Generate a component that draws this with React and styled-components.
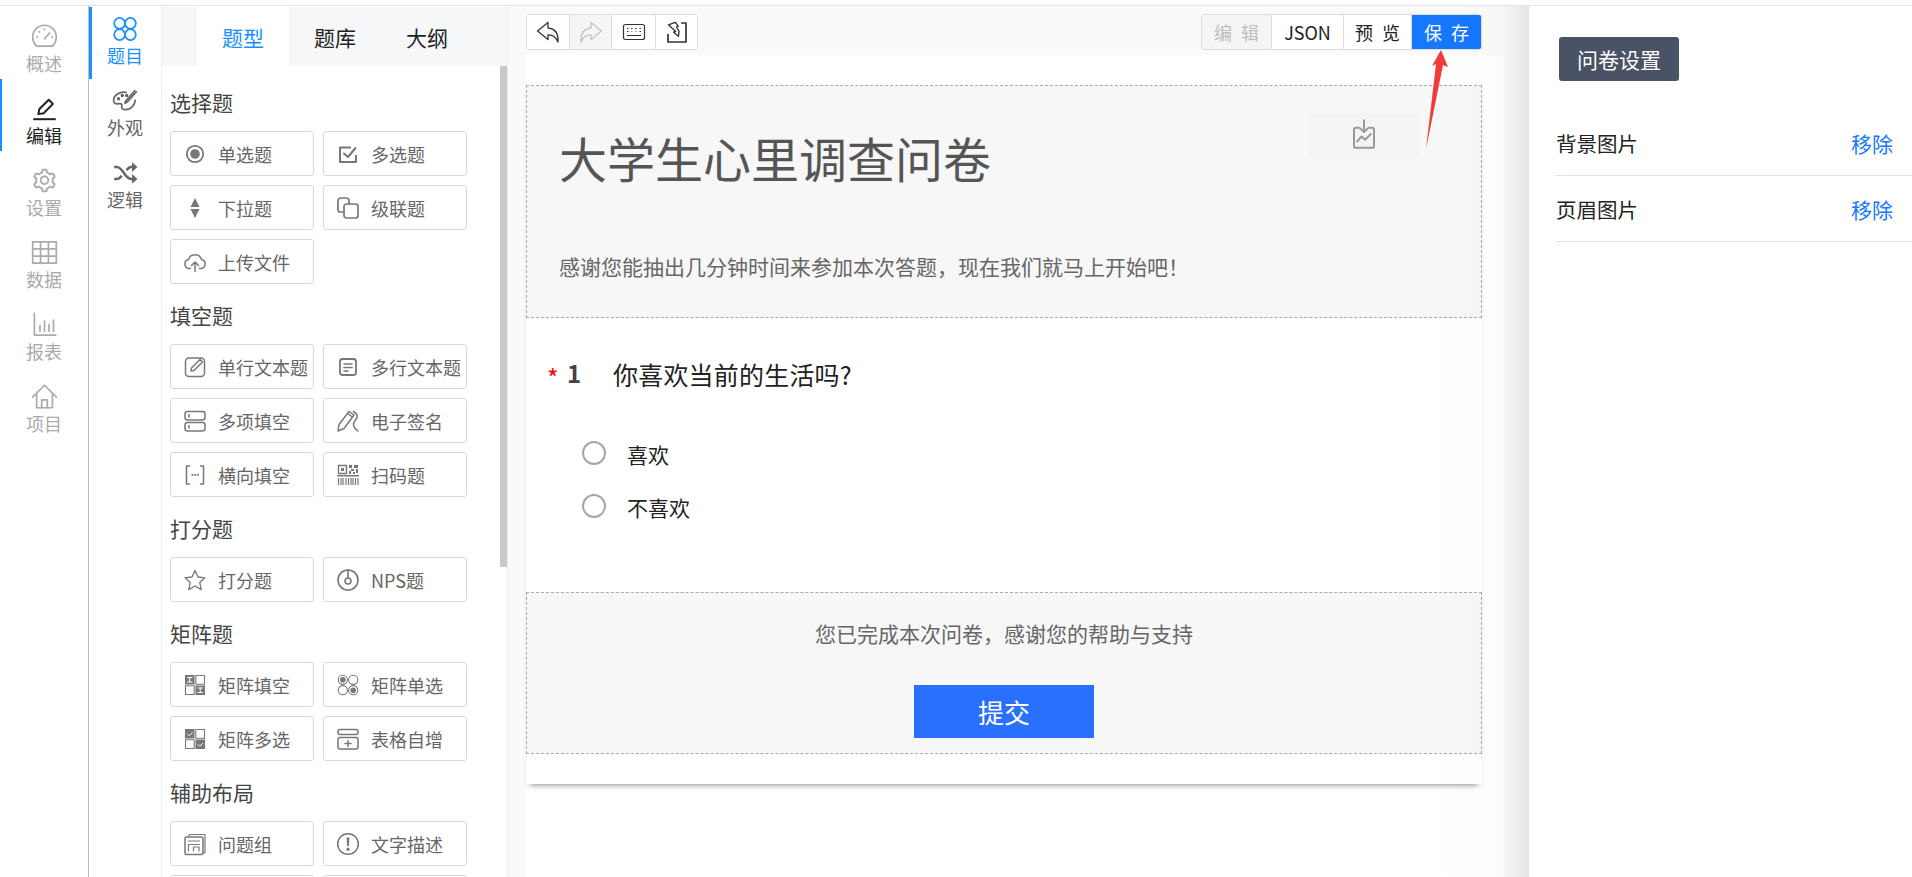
import React from 'react';
import styled, { createGlobalStyle } from 'styled-components';
import { AiOutlineSetting } from 'react-icons/ai';

const Global = createGlobalStyle`
  html, body { margin: 0; height: 100%; overflow: hidden; background: #fff; }
  body { font-family: "Noto Sans CJK SC", "Liberation Sans", sans-serif; }
  #root { height: 100%; }
  * { box-sizing: border-box; }
`;

const Page = styled.div`
  position: relative; width: 1912px; height: 877px; display: flex; flex-direction: column; overflow: hidden;
`;
const TopStrip = styled.div`
  flex: none; height: 6px; border-bottom: 1px solid #e4e4e4;
`;
const Body = styled.div`
  flex: 1; min-height: 0; display: flex;
`;
const PrimaryNav = styled.nav`
  flex: none; width: 89px; padding-top: 1px; border-right: 1px solid #bdbdbd; display: flex; flex-direction: column;
`;
const PrimaryItem = styled.div`
  position: relative; height: 72px; display: flex; flex-direction: column; align-items: center; padding-top: 16px;
  color: ${p => (p.$active ? '#222' : '#aaa')};
  &::before {
    content: ''; position: absolute; left: 0; top: 0; bottom: 0; width: 2px;
    background: ${p => (p.$active ? '#1890ff' : 'transparent')};
  }
`;
const SecondaryNav = styled.nav`
  flex: none; width: 73px; padding-top: 1px; border-right: 1px solid #efefef; display: flex; flex-direction: column;
`;
const SecondaryItem = styled.div`
  position: relative; height: 72px; display: flex; flex-direction: column; align-items: center; padding-top: 9px;
  color: ${p => (p.$active ? '#1890ff' : '#666')};
  &::before {
    content: ''; position: absolute; left: 0; top: 0; bottom: 0; width: 3px;
    background: ${p => (p.$active ? '#1890ff' : 'transparent')};
  }
`;
const NavLabel = styled.span`
  font-size: 18px; line-height: 26px;
`;
const GearIcon = styled(AiOutlineSetting)`
  flex: none; width: 27px; height: 27px; display: block;
`;
const Panel = styled.aside`
  position: relative; flex: none; width: 346px; padding-top: 1px; border-right: 1px solid #eee; display: flex; flex-direction: column; overflow: hidden;
`;
const Tabs = styled.div`
  flex: none; height: 59px; padding-left: 35px; background: #f6f7f9; display: flex;
`;
const Tab = styled.div`
  width: 92px; display: flex; align-items: center; justify-content: center; padding-top: 1px;
  font-size: 21px; color: ${p => (p.$active ? '#1890ff' : '#222')};
  background: ${p => (p.$active ? '#fff' : 'transparent')};
`;
const Thumb = styled.div`
  position: absolute; right: 0; top: 60px; width: 7px; height: 501px; background: #c8c8c8;
`;
const PanelBody = styled.div`
  flex: 1; min-height: 0; padding: 23px 0 0 8px; display: flex; flex-direction: column; gap: 18px;
`;
const Section = styled.section`
  display: flex; flex-direction: column; gap: 14px;
`;
const SectionTitle = styled.h3`
  margin: 0; font-size: 21px; line-height: 26px; padding-bottom: 2px; font-weight: 400; color: #444;
`;
const TypeGrid = styled.div`
  display: grid; grid-template-columns: 144px 144px; grid-auto-rows: 45px; gap: 9px;
`;
const TypeButton = styled.div`
  display: flex; align-items: center; gap: 11px; padding-left: 12px;
  border: 1px solid #d9d9d9; border-radius: 3px; background: #fff; color: #777;
`;
const TypeLabel = styled.span`
  font-size: 18px; color: #666; white-space: nowrap;
`;

const Main = styled.main`
  position: relative; flex: none; width: 1021px; padding: 8px 0 0 18px; background: #fafafa; display: flex; flex-direction: column;
  &::after {
    content: ''; position: absolute; top: 0; right: 0; bottom: 0; width: 100px; pointer-events: none;
    background: linear-gradient(to right, rgba(0,0,0,0) 0, rgba(0,0,0,.012) 74%, rgba(0,0,0,.025) 75%, rgba(0,0,0,.08) 100%);
  }
`;
const ToolRow = styled.div`
  flex: none; width: 956px; height: 36px; display: flex; justify-content: space-between;
`;
const ToolGroup = styled.div`
  display: flex; border: 1px solid #dcdcdc; border-radius: 3px; overflow: hidden; background: #fff;
`;
const ToolCell = styled.div`
  display: flex; align-items: center; justify-content: center; width: ${p => p.$w}px;
  background: ${p => (p.$off ? '#f5f5f5' : '#fff')};
  color: ${p => (p.$off ? '#c4c4c4' : '#333')};
  & + & { border-left: 1px solid #dcdcdc; }
`;
const ActionCell = styled.div`
  display: flex; align-items: center; justify-content: center; width: ${p => p.$w}px;
  font-size: 18px; white-space: pre; word-spacing: 5px;
  background: ${p => (p.$primary ? '#1677ff' : p.$off ? '#f5f5f5' : '#fff')};
  color: ${p => (p.$primary ? '#fff' : p.$off ? '#bdbdbd' : '#222')};
  & + & { border-left: 1px solid #dcdcdc; }
`;
const Canvas = styled.div`
  flex: 1; width: 978px; margin-top: 5px; padding-top: 30px; background: #fff;
`;
const Paper = styled.div`
  width: 956px; padding-bottom: 30px; background: #fff; box-shadow: 0 5px 6px -4px rgba(0,0,0,.45);
`;
const SurveyHeader = styled.header`
  position: relative; height: 233px; padding: 41px 0 0 32px; border: 1px dashed #aaa; background: #f7f7f7;
`;
const SurveyTitle = styled.h1`
  margin: 0; font-size: 48px; line-height: 60px; font-weight: 400; color: #555;
`;
const SurveyIntro = styled.p`
  margin: 64px 0 0; font-size: 21px; line-height: 30px; color: #666;
`;
const HeaderImage = styled.div`
  position: absolute; top: 27px; right: 61px; width: 112px; height: 45px; background: #f4f4f4; color: #999;
  display: flex; align-items: center; justify-content: center; padding: 0 0 3px;
`;
const Question = styled.div`
  height: 274px; padding-top: 36px;
`;
const QuestionLine = styled.div`
  height: 40px; padding-left: 21px; display: flex; align-items: center;
`;
const Required = styled.span`
  width: 20px; font-size: 25px; color: #f00; line-height: 1; padding-top: 6px;
`;
const QuestionNo = styled.span`
  width: 46px; font-size: 24px; font-weight: 700; color: #444; line-height: 1; margin-top: -3px;
`;
const QuestionText = styled.span`
  font-size: 25px; color: #222; letter-spacing: .2px;
`;
const Options = styled.div`
  margin-top: 33px; padding-left: 56px; display: flex; flex-direction: column;
`;
const Option = styled.label`
  height: 53px; display: flex; align-items: center; gap: 21px; font-size: 21px; color: #222;
`;
const Radio = styled.span`
  flex: none; width: 24px; height: 24px; border: 2px solid #a6a6a6; border-radius: 50%; background: #fff; margin-top: -2px;
`;
const SurveyFooter = styled.footer`
  height: 162px; padding-top: 25px; border: 1px dashed #aaa; background: #f7f7f7; display: flex; flex-direction: column; align-items: center;
`;
const FooterText = styled.p`
  margin: 0; font-size: 21px; line-height: 30px; color: #666;
`;
const SubmitButton = styled.div`
  margin-top: 37px; width: 180px; height: 53px; background: #2970ff; color: #fff; font-size: 26px;
  display: flex; align-items: center; justify-content: center;
`;
const Settings = styled.aside`
  flex: 1; min-width: 0; padding: 31px 19px 0 27px; background: #fff; display: flex; flex-direction: column;
`;
const SettingsButton = styled.div`
  align-self: flex-start; margin-left: 3px; width: 120px; height: 44px; border-radius: 3px; background: #4a5266; color: #fff;
  font-size: 21px; display: flex; align-items: center; justify-content: center;
`;
const SettingsList = styled.div`
  margin-top: 29px; margin-right: -19px;
`;
const SettingRow = styled.div`
  height: 66px; padding: 1px 19px 0 0; border-bottom: 1px solid #dde3ea; display: flex; align-items: center; justify-content: space-between;
  font-size: 20.5px; color: #222;
`;
const RemoveLink = styled.span`
  color: #1677ff; font-size: 21px;
`;
const Arrow = styled.svg`
  position: absolute; left: 1420px; top: 48px; width: 32px; height: 104px;
`;

const Svg = styled.svg`
  flex: none; width: ${p => p.$s}px; height: ${p => p.$s}px; display: block;
  fill: none; stroke: currentColor; stroke-width: ${p => p.$w}; stroke-linecap: round; stroke-linejoin: round;
`;
const Icon = ({ name, s = 24, w = 1.5 }) => <Svg viewBox="0 0 24 24" $s={s} $w={w}>{ICONS[name]}</Svg>;
const Solid = p => <path fill="currentColor" stroke="none" {...p} />;

const ICONS = {
  gauge: <><path d="M5 20.5h14c2-1.8 3.5-4.8 3.5-8A10.500 10.500 0 0 0 1.500 12.500c0 3.200 1.500 6.200 3.500 8Z" /><path d="M12 14l4.500-5M5 12.500h.5M18.500 12.500h.5M12 5.500V6M7.200 7.700l.4.4" /></>,
  edit: <><path d="M2 21.500h20" strokeWidth="1.800" strokeLinecap="butt" /><path d="M6.500 17l1-4.500L15.800 4.200l3.700 3.700-8.300 8.300Z" strokeWidth="1.800" /></>,
  table: <><rect x="1.500" y="2.500" width="21" height="19" /><path d="M1.500 8.800h21M1.500 15.200h21M8.500 2.500v19M15.500 2.500v19" /></>,
  chart: <><path d="M3 2v19.500h19" /><path d="M8 18v-5M12 18V9M16 18v-6M20 18V8" /></>,
  home: <><path d="M1.500 12.500 12 2l10.500 10.500M5 10v12h14V10" /><path d="M9.500 22v-7h5v7" /></>,
  rings: <><circle cx="7" cy="6.800" r="5" /><circle cx="17" cy="6.800" r="5" /><circle cx="7" cy="17.200" r="5" /><circle cx="17" cy="17.200" r="5" /></>,
  palette: <><path d="M13 4C7 3 1.500 6.500 1.500 11.500c0 3 2.500 3.500 4.500 3 2.500-.6 3.500.5 3 2.500-.4 2 1 3 3.500 3 5 0 8.500-4 9-8.500" /><path d="M22.500 3.500 14 13l-2 1 .8-2.200L21 2.500" /><circle cx="6" cy="10" r=".8" /><circle cx="9.500" cy="7" r=".8" /><circle cx="13.500" cy="7" r=".8" /></>,
  shuffle: <><path d="M2 6.500h2.500c5.500 0 7.500 11 13 11H20M2 17.500h2.500c2 0 3.200-1.300 4.400-3M13.500 9.500c1.100-1.700 2.300-3 4-3H20" strokeWidth="2.300" strokeLinecap="butt" /><Solid d="M18.500 2 23.500 6.500l-5 4.500ZM18.500 13l5 4.500-5 4.500Z" /></>,
  radio: <><circle cx="12" cy="12" r="8.200" strokeWidth="1.800" /><Solid d="M12 7.200a4.800 4.800 0 1 0 0 9.600 4.800 4.800 0 0 0 0-9.600Z" /></>,
  check: <><path d="M20 13v7H4V5.500h11" strokeWidth="2" strokeLinecap="butt" /><path d="M8 11.500l4 3.500 7.500-9" strokeWidth="2" /></>,
  select: <><Solid d="M12 2l4.500 9h-9ZM12 22l-4.500-9h9Z" /></>,
  cascade: <><path d="M8 16H4.500A2.500 2.500 0 0 1 2 13.500v-9A2.500 2.500 0 0 1 4.500 2h6A2.500 2.500 0 0 1 13 4.500V8" strokeWidth="1.700" /><rect x="8" y="8" width="14" height="14" rx="2.500" strokeWidth="1.700" /></>,
  upload: <><path d="M7.500 18.500H6A4.500 4.500 0 0 1 5.500 9.600a6.800 6.800 0 0 1 13 0 4.500 4.500 0 0 1-.5 8.900h-1.500" /><path d="M12 21.500v-9M8.500 15.500 12 12l3.500 3.500" /></>,
  textline: <><rect x="2.500" y="3" width="19" height="18.500" rx="3.500" /><path d="M11 15.500l-3 .5.500-3L17 4.500l2.500 2.500Z" /></>,
  textarea: <><rect x="4" y="4" width="16" height="16" rx="2.500" strokeWidth="1.800" /><path d="M8 9h8M8 12.500h8M8 16h4" /></>,
  fields: <><rect x="2" y="2.500" width="20" height="8.500" rx="2.500" /><rect x="2" y="13.500" width="20" height="8.500" rx="2.500" /><path d="M6 5.500v2.500M6 16.500v2.500" /></>,
  sign: <><path d="M2 22l1-6.500L13 2.500l5 3.500L8 19.500Z" /><path d="M11.500 4.500l5 3.500M17.500 2.500c4 2.500 5 5 2 8.500s-3 7 2.500 11" /></>,
  bracket: <><path d="M6.500 3H3.500v18h3M17.500 3h3v18h-3" /><Solid d="M8.500 11h1.800v1.800H8.500ZM11.200 11H13v1.800h-1.800ZM13.900 11h1.800v1.800h-1.800Z" /></>,
  scan: <><path d="M2.500 2.500h8v8h-8Z" strokeWidth="1.400" strokeLinecap="butt" /><Solid d="M5 5h3v3H5ZM13 2h3v3h-3ZM18 2h4v3h-4ZM15 6h3v2h-3ZM20 6h2v4h-2ZM13 8h2v3h-2ZM17 9h2v2h-2ZM1 12h22v1.400H1Z" /><path d="M2.500 15v7M5 15v7M7 15v7M10 15v7M12.500 15v7M15 15v7M17 15v7M19.500 15v7M22 15v7" strokeLinecap="butt" strokeWidth="1.200" /></>,
  star: <path d="M12 2.500l3 6.500 7 .8-5.200 4.800 1.400 7L12 18l-6.200 3.600 1.400-7L2 9.800 9 9Z" strokeWidth="1.300" />,
  nps: <><circle cx="12" cy="12" r="10" strokeWidth="1.600" /><circle cx="12" cy="13" r="3" strokeWidth="1.600" /><path d="M12 2v8" strokeWidth="1.600" /></>,
  matrixFill: <><Solid d="M2 2h9.500v9.500H2ZM12.500 12.500H22V22h-9.500Z" /><path d="M12.800 2.500h8.700v8.700h-8.700ZM2.500 12.800h8.700v8.700H2.500Z" strokeWidth="1.100" strokeLinecap="butt" /><path d="M4.500 4.500h4.500M6.700 4.500v4.500M4.500 9h4.500M15 15h4.500M17.200 15v4.500M15 19.500h4.500" stroke="#fff" strokeWidth="1" /></>,
  matrixRadio: <><circle cx="6.800" cy="6.800" r="4.600" strokeWidth="1.100" /><circle cx="17.200" cy="6.800" r="4.600" strokeWidth="1.100" /><circle cx="6.800" cy="17.200" r="4.600" strokeWidth="1.100" /><circle cx="17.200" cy="17.200" r="4.600" strokeWidth="1.100" /><Solid d="M6.800 4a2.800 2.800 0 1 0 0 5.600 2.800 2.800 0 0 0 0-5.600ZM17.200 14.400a2.800 2.800 0 1 0 0 5.600 2.800 2.800 0 0 0 0-5.600Z" /></>,
  matrixCheck: <><Solid d="M2 2h9.500v9.500H2ZM12.500 12.500H22V22h-9.500Z" /><path d="M12.800 2.500h8.700v8.700h-8.700ZM2.500 12.800h8.700v8.700H2.500Z" strokeWidth="1.100" strokeLinecap="butt" /><path d="M4.500 7l1.800 1.800 3-3M15 17.500l1.800 1.800 3-3" stroke="#fff" strokeWidth="1" /></>,
  tableAdd: <><rect x="2" y="2.500" width="20" height="5" rx="2" /><path d="M2 12.500a2 2 0 0 1 2-2h16a2 2 0 0 1 2 2V20a2 2 0 0 1-2 2H4a2 2 0 0 1-2-2ZM12 13.500v6M9 16.500h6" /></>,
  group: <><path d="M6 4.500V3.500a1 1 0 0 1 1-1h15v17.500a1 1 0 0 1-1 1h-1" strokeWidth="1.200" /><rect x="2" y="5" width="18" height="17.500" rx="1.500" /><path d="M5.500 9h11M5.500 12.500h11M5.500 12.500V19M10.500 15v4M10.500 15H16V19" strokeWidth="1.200" /></>,
  info: <><circle cx="12" cy="12" r="10.300" /><Solid d="M10.600 5.500h2.800l-.5 8.500h-1.800ZM12 15.500a1.700 1.700 0 1 0 0 3.400 1.700 1.700 0 0 0 0-3.400Z" /></>,
  undo: <path d="M1.500 11 12 2.500V8c6.500.5 10.500 5 10 14-1.500-4.500-5-7-10-7.200V19.500Z" strokeWidth="1.300" />,
  redo: <path d="M22.500 11 12 2.500V8C5.500 8.500 1.500 13 2 22c1.500-4.500 5-7 10-7.200V19.500Z" strokeWidth="1.300" />,
  keyboard: <><rect x="1.500" y="4.500" width="21" height="15" rx="2" strokeWidth="1.200" /><path d="M5 8.500h1.500M9 8.500h1.500M13 8.500h1.500M17.500 8.500h1.500M5 11.500h1.500M17.500 11.500h1.500M5 15.500h14" strokeWidth="1.200" strokeLinecap="butt" /><path d="M9 11.500h1.500M13 11.500h1.500" stroke="#f08a24" strokeWidth="1.200" strokeLinecap="butt" /></>,
  importBox: <><path d="M3 14v8h18V3h-5" strokeWidth="1.700" strokeLinecap="butt" /><path d="M3 5.500l6.500-3.500 3.500 3.500-1.800.8 3.300 4.200v5l-5.500-3.500 2.200-1Z" transform="rotate(8 8 8)" strokeWidth="1.300" /></>,
  imageIn: <><path d="M8 7H5.500A1.500 1.500 0 0 0 4 8.500v13A1.500 1.500 0 0 0 5.500 23h13a1.500 1.500 0 0 0 1.500-1.500v-13A1.500 1.500 0 0 0 18.500 7H16" strokeWidth="1.600" /><path d="M12 1v9M9 7.500l3 3 3-3M6.500 18l3.500-4 3 2.500 4.500-4.500" strokeWidth="1.600" /></>,
};

const PRIMARY = [
  ['gauge', '概述'], ['edit', '编辑', true], ['gear', '设置'], ['table', '数据'], ['chart', '报表'], ['home', '项目'],
];
const SECONDARY = [['rings', '题目', true], ['palette', '外观'], ['shuffle', '逻辑']];
const SECTIONS = [
  ['选择题', [['radio', '单选题'], ['check', '多选题'], ['select', '下拉题'], ['cascade', '级联题'], ['upload', '上传文件']]],
  ['填空题', [['textline', '单行文本题'], ['textarea', '多行文本题'], ['fields', '多项填空'], ['sign', '电子签名'], ['bracket', '横向填空'], ['scan', '扫码题']]],
  ['打分题', [['star', '打分题'], ['nps', 'NPS题']]],
  ['矩阵题', [['matrixFill', '矩阵填空'], ['matrixRadio', '矩阵单选'], ['matrixCheck', '矩阵多选'], ['tableAdd', '表格自增']]],
  ['辅助布局', [['group', '问题组'], ['info', '文字描述'], [null, ''], [null, '']]],
];

export default function App() {
  return (
    <Page>
      <Global />
      <TopStrip />
      <Body>
        <PrimaryNav>
          {PRIMARY.map(([icon, label, active]) => (
            <PrimaryItem key={label} $active={active}>
              {icon === 'gear' ? <GearIcon /> : <Icon name={icon} s={27} />}
              <NavLabel>{label}</NavLabel>
            </PrimaryItem>
          ))}
        </PrimaryNav>
        <SecondaryNav>
          {SECONDARY.map(([icon, label, active]) => (
            <SecondaryItem key={label} $active={active}>
              <Icon name={icon} s={26} w={1.6} />
              <NavLabel>{label}</NavLabel>
            </SecondaryItem>
          ))}
        </SecondaryNav>
        <Panel>
          <Tabs>
            <Tab $active>题型</Tab>
            <Tab>题库</Tab>
            <Tab>大纲</Tab>
          </Tabs>
          <PanelBody>
            {SECTIONS.map(([title, items]) => (
              <Section key={title}>
                <SectionTitle>{title}</SectionTitle>
                <TypeGrid>
                  {items.map(([icon, label], i) => (
                    <TypeButton key={i}>
                      {icon && <Icon name={icon} />}
                      <TypeLabel>{label}</TypeLabel>
                    </TypeButton>
                  ))}
                </TypeGrid>
              </Section>
            ))}
          </PanelBody>
          <Thumb />
        </Panel>
        <Main>
          <ToolRow>
            <ToolGroup>
              <ToolCell $w={42}><Icon name="undo" s={24} /></ToolCell>
              <ToolCell $w={42} $off><Icon name="redo" s={24} /></ToolCell>
              <ToolCell $w={44}><Icon name="keyboard" s={24} /></ToolCell>
              <ToolCell $w={42}><Icon name="importBox" s={24} /></ToolCell>
            </ToolGroup>
            <ToolGroup>
              <ActionCell $w={69} $off>编 辑</ActionCell>
              <ActionCell $w={72}>JSON</ActionCell>
              <ActionCell $w={68}>预 览</ActionCell>
              <ActionCell $w={70} $primary>保 存</ActionCell>
            </ToolGroup>
          </ToolRow>
          <Canvas>
            <Paper>
              <SurveyHeader>
                <SurveyTitle>大学生心里调查问卷</SurveyTitle>
                <SurveyIntro>感谢您能抽出几分钟时间来参加本次答题，现在我们就马上开始吧！</SurveyIntro>
                <HeaderImage><Icon name="imageIn" s={30} w={1.4} /></HeaderImage>
              </SurveyHeader>
              <Question>
                <QuestionLine>
                  <Required>*</Required>
                  <QuestionNo>1</QuestionNo>
                  <QuestionText>你喜欢当前的生活吗?</QuestionText>
                </QuestionLine>
                <Options>
                  <Option><Radio />喜欢</Option>
                  <Option><Radio />不喜欢</Option>
                </Options>
              </Question>
              <SurveyFooter>
                <FooterText>您已完成本次问卷，感谢您的帮助与支持</FooterText>
                <SubmitButton>提交</SubmitButton>
              </SurveyFooter>
            </Paper>
          </Canvas>
        </Main>
        <Settings>
          <SettingsButton>问卷设置</SettingsButton>
          <SettingsList>
            <SettingRow>背景图片<RemoveLink>移除</RemoveLink></SettingRow>
            <SettingRow>页眉图片<RemoveLink>移除</RemoveLink></SettingRow>
          </SettingsList>
        </Settings>
      </Body>
      <Arrow viewBox="0 0 32 104">
        <polygon points="21,2 28,19 23,17 6,101 16,16 12,18" fill="#f33a3a" />
      </Arrow>
    </Page>
  );
}
